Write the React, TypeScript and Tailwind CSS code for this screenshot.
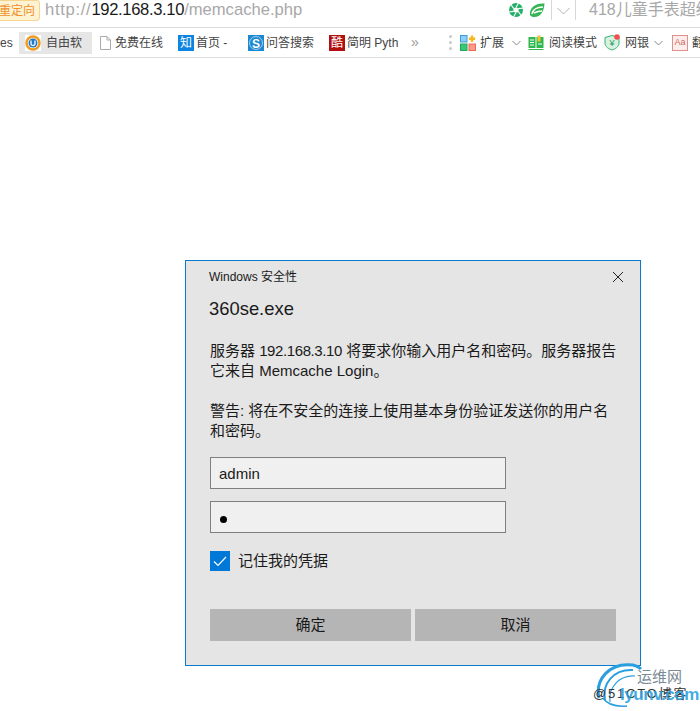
const font = "font-['Liberation_Sans','Noto_Sans_CJK_SC',sans-serif]";

function Chevron({ className }: { className: string }) {
  return (
    <svg className={className} width="9" height="6" viewBox="0 0 9 6" fill="none" stroke="#888" strokeWidth="1">
      <path d="M0.5 1 L4.5 5 L8.5 1" />
    </svg>
  );
}

function AddressBar() {
  return (
    <div className="flex h-7 items-start border-b border-[#dcdcdc] overflow-hidden">
      <div className="flex h-[21px] w-10 shrink-0 items-center justify-end whitespace-nowrap pr-[4px] bg-[#fdf3d2] border border-l-0 border-[#f5d590] text-[12px] text-[#f0902a] rounded-r-sm">
        重定向
      </div>
      <div className="ml-[5px] text-[16.6px] leading-5 text-[#a8a8a8] w-[463px] shrink-0 whitespace-nowrap">
        <span className="tracking-[0.7px]">http://</span>
        <span className="tracking-[-0.35px] text-[#1a1a1a]">192.168.3.10</span>/memcache.php
      </div>
      <svg className="mt-[2px] shrink-0" width="16" height="16" viewBox="0 0 16 16" fill="none">
        <circle cx="8" cy="8" r="7" fill="#25b06a" />
        <circle cx="8" cy="8" r="2.6" fill="#fff" />
        <path d="M8 5.4 L11 0 M10.2 6.6 L16 6 M10.2 9.4 L13.5 14 M8 10.6 L5 16 M5.8 9.4 L0 10 M5.8 6.6 L2.5 2" stroke="#fff" strokeWidth="1.1" />
      </svg>
      <svg className="ml-[5px] mt-[2px] shrink-0" width="16" height="16" viewBox="0 0 16 16">
        <path d="M1 13 C0 6 6 1 15.5 1.5 C15 9 12 15 5 15 C3.5 15 2 14.5 1 13 Z" fill="#35b455" />
        <path d="M3 12 C4 7 8 5 14 5 M5 11 C8 9.5 10 9 13 9" fill="none" stroke="#fff" strokeWidth="1.4" />
      </svg>
      <div className="ml-[6px] h-[20px] w-px bg-[#d8d8d8] shrink-0" />
      <svg className="ml-[5px] mt-[7px] shrink-0" width="13" height="8" viewBox="0 0 13 8" fill="none" stroke="#b0b0b0" strokeWidth="1">
        <path d="M0.5 1 L6.5 7 L12.5 1" />
      </svg>
      <div className="ml-[5px] h-[20px] w-px bg-[#d8d8d8] shrink-0" />
      <div className="ml-[13px] text-[16px] leading-5 text-[#a8a8a8] whitespace-nowrap">418儿童手表超级领券</div>
    </div>
  );
}

function BookmarksBar() {
  return (
    <div className="flex h-[30px] items-center border-b border-[#dcdcdc] overflow-hidden text-[12px] text-[#444] whitespace-nowrap">
      <span className="w-[19px] shrink-0 text-[12px] -ml-[4px] mr-[4px] text-right pr-[5px]">res</span>
      <div className="flex h-[22px] w-[73px] shrink-0 items-center bg-[#e6e6e6] pl-[6px]">
        <svg width="16" height="16" viewBox="0 0 16 16" className="shrink-0">
          <rect width="16" height="16" fill="#fff" />
          <circle cx="8" cy="8" r="6.5" fill="none" stroke="#f09a20" strokeWidth="2.5" />
          <circle cx="8" cy="8" r="4.5" fill="#1e78c8" />
          <path d="M6 5.5 V9 C6 11 10 11 10 9 V5.5" fill="none" stroke="#fff" strokeWidth="1.3" />
        </svg>
        <span className="ml-[5px]">自由软</span>
      </div>
      <svg className="ml-[8px] shrink-0" width="11" height="14" viewBox="0 0 11 14" fill="#fff" stroke="#aaa">
        <path d="M0.5 0.5 H7 L10.5 4 V13.5 H0.5 Z M7 0.5 V4 H10.5" />
      </svg>
      <span className="ml-[4px]">免费在线</span>
      <span className="ml-[15px] flex h-4 w-4 shrink-0 items-center justify-center bg-[#0e84e0] text-[12px] text-white">知</span>
      <span className="ml-[2px] w-[52px] shrink-0">首页 -</span>
      <svg className="shrink-0" width="16" height="16" viewBox="0 0 16 16">
        <rect width="16" height="16" fill="#1e88d0" />
        <circle cx="8" cy="8" r="6.5" fill="none" stroke="#fff" strokeWidth="0.6" />
        <text x="8" y="12.5" fontSize="12" fontWeight="700" textAnchor="middle" fill="#fff" fontFamily="Liberation Sans">S</text>
      </svg>
      <span className="ml-[2px]">问答搜索</span>
      <span className="ml-[15px] flex h-4 w-4 shrink-0 items-center justify-center bg-[#b01010] text-[12px] text-white">酷</span>
      <span className="ml-[2px] w-[52px] shrink-0">简明 Pyth</span>
      <span className="ml-[12px] text-[14px] leading-none text-[#999] w-[30px] shrink-0 -mt-[2px]">»</span>
      <div className="ml-[8px] flex w-[3px] shrink-0 flex-col gap-[3px]">
        <i className="block h-[3px] bg-[#c8c8c8] rounded-full" />
        <i className="block h-[3px] bg-[#c8c8c8] rounded-full" />
        <i className="block h-[3px] bg-[#c8c8c8] rounded-full" />
      </div>
      <svg className="ml-[8px] shrink-0" width="16" height="16" viewBox="0 0 16 16">
        <rect x="0.5" y="0.5" width="6.5" height="6.5" fill="#8cd0fa" stroke="#3a9be0" />
        <rect x="0.5" y="9" width="6.5" height="6.5" fill="#38c878" stroke="#20a858" />
        <rect x="9" y="9" width="6.5" height="6.5" fill="#fa9a88" stroke="#ee6a55" />
        <path d="M12 0.5 V7 M8.8 3.8 H15.2" stroke="#f4b820" strokeWidth="2.4" />
      </svg>
      <span className="ml-[4px]">扩展</span>
      <Chevron className="ml-[8px] shrink-0" />
      <svg className="ml-[7px] shrink-0" width="16" height="16" viewBox="0 0 16 16">
        <path d="M0.5 2 H7.5 V13 H0.5 Z M8.5 2 H15.5 V13 H8.5 Z" fill="#2fb84e" />
        <rect x="9.5" y="0.5" width="3" height="6" fill="#f4c430" />
        <path d="M2 5 H6 M2 7.5 H6 M2 10 H6 M10 9 H14" stroke="#fff" />
        <path d="M0.5 14.5 H15.5" stroke="#2fb84e" />
      </svg>
      <span className="ml-[5px]">阅读模式</span>
      <svg className="ml-[7px] shrink-0" width="17" height="17" viewBox="0 0 17 17">
        <path d="M1 3.5 L8 1.5 L15 3.5 V9 C15 13 11 15 8 16 C5 15 1 13 1 9 Z" fill="#d8f2e2" stroke="#38b070" />
        <text x="8" y="12" fontSize="9" textAnchor="middle" fill="#2a9a60" fontFamily="Liberation Sans">¥</text>
        <circle cx="13" cy="3" r="2.8" fill="#f0504c" />
      </svg>
      <span className="ml-[4px]">网银</span>
      <Chevron className="ml-[5px] shrink-0" />
      <span className="ml-[9px] flex h-4 w-4 shrink-0 items-center justify-center border border-[#e0908a] bg-[#fbeeec] text-[9px] text-[#d06860]">Aa</span>
      <span className="ml-[4px]">翻译</span>
    </div>
  );
}

function TextBox({ children }: { children: React.ReactNode }) {
  return (
    <div className="flex h-8 w-[296px] items-center border border-[#7f7f7f] bg-[#f0f0f0] pl-2 text-[15px] text-[#1a1a1a]">
      {children}
    </div>
  );
}

function SecurityDialog() {
  return (
    <div className="ml-[185px] mt-[202px] h-[406px] w-[456px] border border-[#0a7ad1] bg-[#e5e5e5] pl-6 pr-6 text-[#1a1a1a]">
      <div className="flex h-[24px] items-end justify-between">
        <span className="-ml-px text-[12px] leading-4">Windows 安全性</span>
        <svg className="mb-[3px] -mr-[7px]" width="10" height="10" viewBox="0 0 10 10" stroke="#222" strokeWidth="1">
          <path d="M0 0 L10 10 M10 0 L0 10" />
        </svg>
      </div>
      <div className="-ml-px mt-[12px] text-[18.4px] leading-6">360se.exe</div>
      <p className="mt-[20px] whitespace-nowrap text-[15px] leading-5">
        服务器 <span className="tracking-[-0.4px]">192.168.3.10</span> 将要求你输入用户名和密码。服务器报告
        <br />
        它来自 Memcache Login。
      </p>
      <p className="mt-5 whitespace-nowrap text-[15px] leading-5">
        警告: 将在不安全的连接上使用基本身份验证发送你的用户名
        <br />
        和密码。
      </p>
      <div className="mt-[16px] flex flex-col gap-3">
        <TextBox>
          <span className="mt-[3px]">admin</span>
        </TextBox>
        <TextBox>
          <span className="ml-px mt-[5px] h-[7px] w-[7px] rounded-full bg-black" />
        </TextBox>
      </div>
      <div className="mt-[18px] flex items-center gap-2">
        <div className="flex h-5 w-5 items-center justify-center bg-[#0078d7]">
          <svg width="14" height="11" viewBox="0 0 14 11" fill="none" stroke="#fff" strokeWidth="1.2">
            <path d="M1 5.5 L5 9.5 L13 1" />
          </svg>
        </div>
        <span className="text-[15px] leading-5">记住我的凭据</span>
      </div>
      <div className="mt-[38px] flex gap-1">
        <div className="flex h-8 flex-1 items-center justify-center bg-[#b5b5b5] text-[15px]">确定</div>
        <div className="flex h-8 flex-1 items-center justify-center bg-[#b5b5b5] text-[15px]">取消</div>
      </div>
    </div>
  );
}

function Watermark() {
  return (
    <div className="absolute left-[592px] top-[662px] h-[49px] w-[108px]">
      <svg className="absolute left-[3px] top-0" width="50" height="46" viewBox="0 0 50 46" fill="none" stroke="#2a9fe0">
        <path d="M4 36 C0 18 14 0 38 3 C42 4 44 5 46 7" strokeWidth="3" />
        <path d="M10 38 C7 22 18 7 38 8" strokeWidth="2" />
        <path d="M15 40 C13 26 24 13 40 14" strokeWidth="1.2" />
        <path d="M8 36 C12 42 20 45 32 44" strokeWidth="1.5" />
      </svg>
      <span className="absolute left-[45px] top-[5px] text-[15px] leading-5 text-[#7a8a96]">运维网</span>
      <span className="absolute left-px top-[22px] text-[13px] leading-5 tracking-[1.8px] text-[#333] whitespace-nowrap">@51CTO博客</span>
      <span className="absolute left-[28px] top-[23px] text-[17px] leading-5 font-bold tracking-tight text-[#2a9fe0]/90 whitespace-nowrap">lyunv.com</span>
    </div>
  );
}

export default function App() {
  return (
    <div className={`relative h-[711px] w-[700px] overflow-hidden bg-white ${font}`}>
      <AddressBar />
      <BookmarksBar />
      <SecurityDialog />
      <Watermark />
    </div>
  );
}
